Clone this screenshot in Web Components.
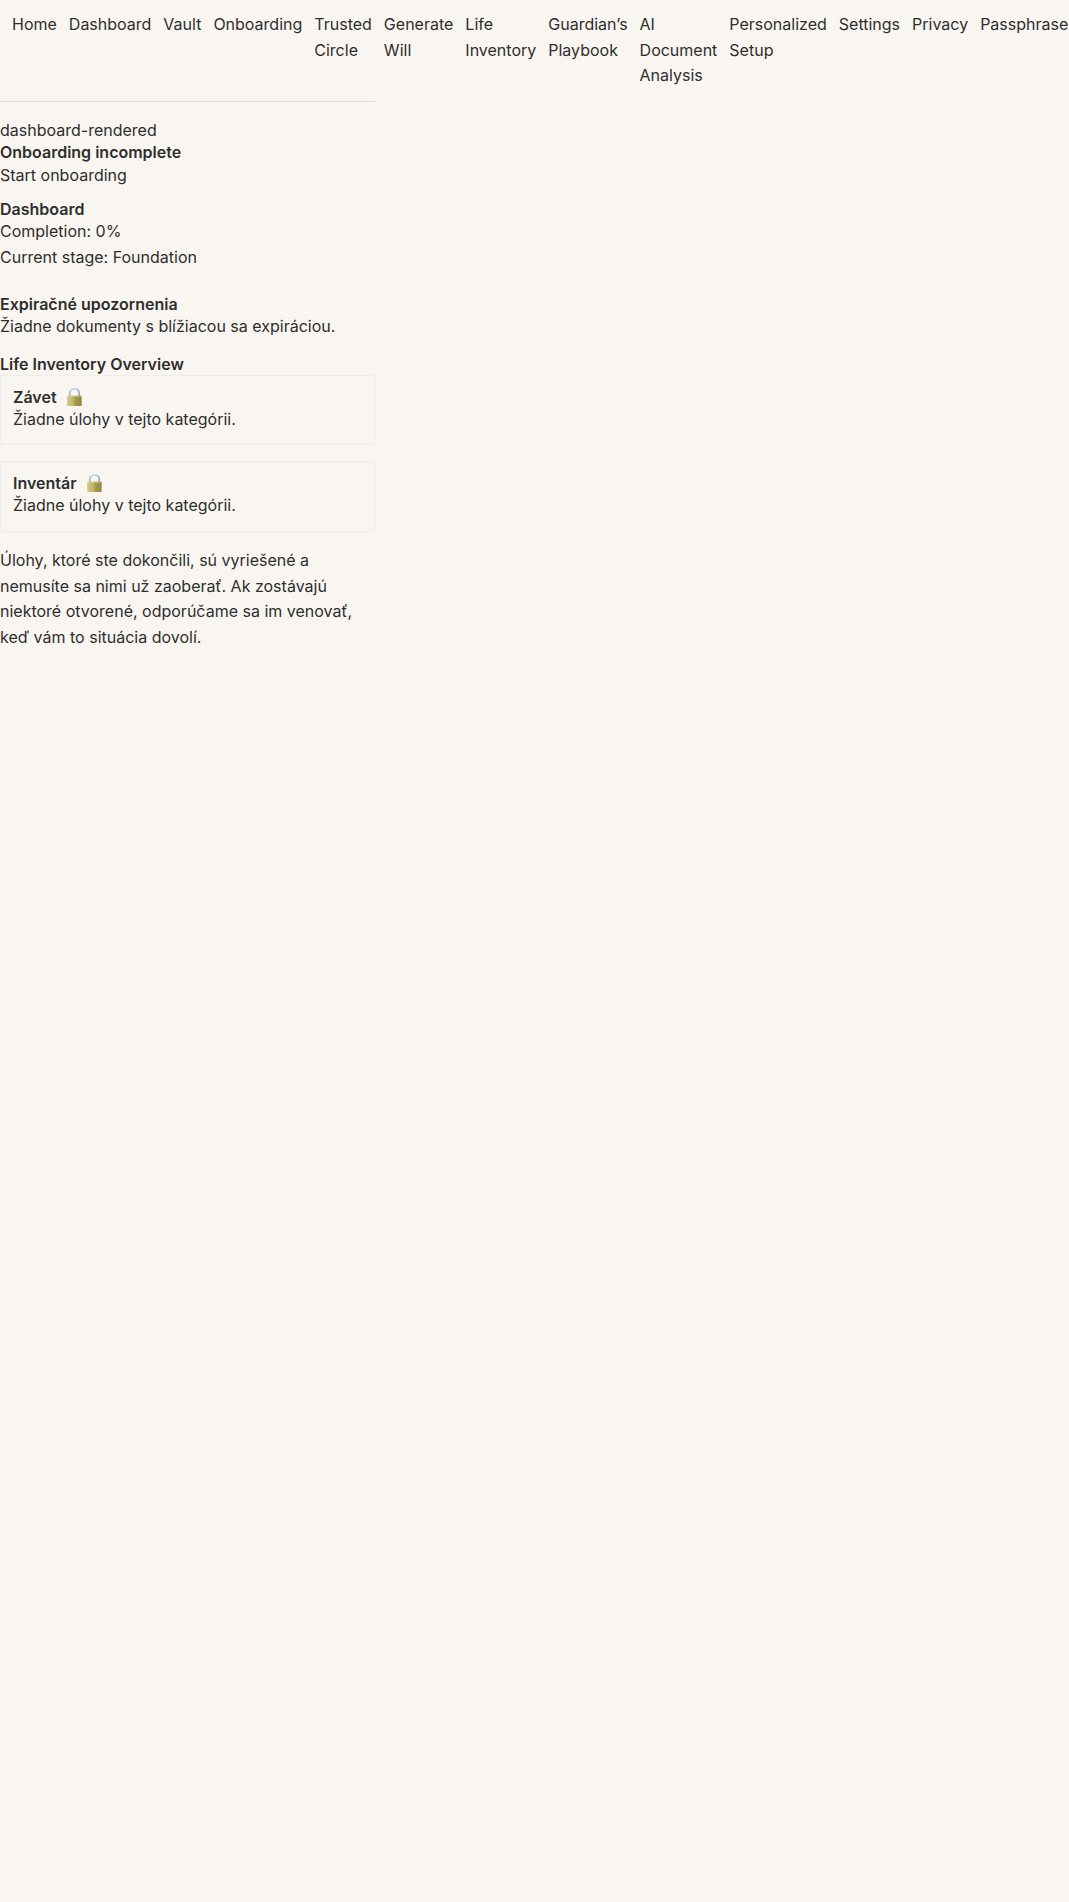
<!DOCTYPE html>
<html lang="sk">
<head>
<meta charset="utf-8">
<title>Dashboard</title>
<style>
html{background:#f9f6f1}
body{margin:0;min-height:100vh;color:#2e2e2e;background:#f9f6f1;font:400 16px/1.6 Inter,"Liberation Sans",sans-serif}
</style>
</head>
<body>
<app-nav>
<nav-link>Home</nav-link><nav-link>Dashboard</nav-link><nav-link>Vault</nav-link><nav-link>Onboarding</nav-link><nav-link>Trusted Circle</nav-link><nav-link>Generate Will</nav-link><nav-link>Life Inventory</nav-link><nav-link>Guardian’s Playbook</nav-link><nav-link>AI Document Analysis</nav-link><nav-link>Personalized Setup</nav-link><nav-link>Settings</nav-link><nav-link>Privacy</nav-link><nav-link>Passphrase</nav-link>
</app-nav>
<dashboard-page></dashboard-page>
<script>
const define = (name, html) => customElements.define(name, class extends HTMLElement {
  constructor() {
    super();
    this.attachShadow({ mode: 'open' }).innerHTML = html;
  }
});
define('nav-link', `<style>:host{display:block}a{color:inherit;text-decoration:none}</style><a><slot></slot></a>`);
define('app-nav', `<style>:host{display:block;width:375px}nav{display:flex;gap:12px;padding:12px;border-bottom:1px solid #dddbd8}</style><nav><slot></slot></nav>`);
define('lock-icon', `<style>:host{display:inline-flex;width:15px;height:18px}svg{display:block}</style>
<svg width="15" height="18" viewBox="0 0 15 18" aria-hidden="true">
<defs><linearGradient id="body"><stop stop-color="#c9c071"/><stop offset=".12" stop-color="#d2ca7c"/><stop offset=".45" stop-color="#bdb563"/><stop offset=".55" stop-color="#a59b50"/><stop offset="1" stop-color="#91884a"/></linearGradient>
<linearGradient id="steel" gradientUnits="userSpaceOnUse" x1="2" x2="13" y1="0" y2="0"><stop stop-color="#91a2b2"/><stop offset=".2" stop-color="#c8d7e6"/><stop offset=".8" stop-color="#b3c3d2"/><stop offset="1" stop-color="#8797a8"/></linearGradient></defs>
<path d="M2.9 9V5.6C2.9 2.6 4.8 1 7.5 1s4.6 1.6 4.6 4.6V9" fill="none" stroke="url(#steel)" stroke-width="1.7"/>
<rect x=".3" y="7.8" width="14.4" height="10.1" rx=".7" fill="url(#body)"/>
<path d="M.8 8.3h13.4" stroke="#d4cc83" stroke-width=".6"/>
<path d="M.8 10.5h13.4M.8 12.9h13.4M.8 15.3h13.4" stroke="#8f8543" stroke-width=".4" opacity=".3"/>
</svg>`);
define('section-title', `<style>:host{display:block}h2{margin:0;font-size:16px;font-weight:600;line-height:1.2}</style><h2><slot></slot></h2>`);
define('category-card', `<style>:host{display:block;border:1px solid #eceded;padding:12px}
header{display:flex;gap:10.3px;height:19.2px;align-items:center}lock-icon{margin-top:-1px}p{margin:0}</style>
<header><section-title><slot name="title"></slot></section-title><lock-icon></lock-icon></header><p><slot></slot></p>`);
define('dashboard-page', `<style>
:host{display:block;width:375px;padding-top:16px}main{display:flex;flex-direction:column}
p{margin:0}a{color:inherit;text-decoration:none}
.summary{margin-top:12px}.alerts{margin-top:24px}.overview{margin-top:16px}
.cards{display:flex;flex-direction:column;gap:16px}.note{margin-top:16px}
</style>
<main>
<div>dashboard-rendered</div>
<section><section-title>Onboarding incomplete</section-title><a>Start onboarding</a></section>
<section class="summary"><section-title>Dashboard</section-title><p>Completion: 0%</p><p>Current stage: Foundation</p></section>
<section class="alerts"><section-title>Expiračné upozornenia</section-title><p>Žiadne dokumenty s blížiacou sa expiráciou.</p></section>
<section class="overview"><section-title>Life Inventory Overview</section-title>
<div class="cards">
<category-card><span slot="title">Závet</span>Žiadne úlohy v tejto kategórii.</category-card>
<category-card><span slot="title">Inventár</span>Žiadne úlohy v tejto kategórii.</category-card>
</div></section>
<p class="note">Úlohy, ktoré ste dokončili, sú vyriešené a nemusíte sa nimi už zaoberať. Ak zostávajú niektoré otvorené, odporúčame sa im venovať, keď vám to situácia dovolí.</p>
</main>`);
</script>
</body>
</html>
